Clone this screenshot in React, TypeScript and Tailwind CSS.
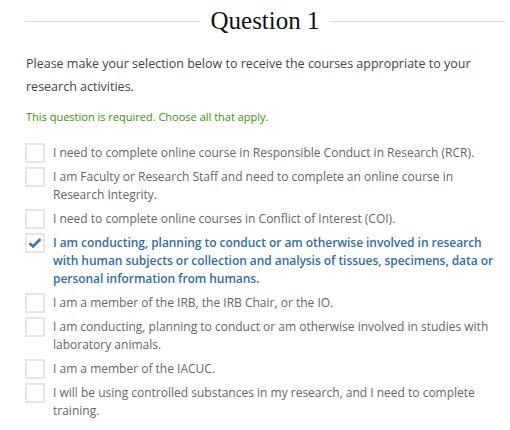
import React from "react";

const options: { text: string; checked?: boolean }[] = [
  { text: "I need to complete online course in Responsible Conduct in Research (RCR)." },
  { text: "I am Faculty or Research Staff and need to complete an online course in Research Integrity." },
  { text: "I need to complete online courses in Conflict of Interest (COI)." },
  {
    text: "I am conducting, planning to conduct or am otherwise involved in research with human subjects or collection and analysis of tissues, specimens, data or personal information from humans.",
    checked: true,
  },
  { text: "I am a member of the IRB, the IRB Chair, or the IO." },
  { text: "I am conducting, planning to conduct or am otherwise involved in studies with laboratory animals." },
  { text: "I am a member of the IACUC." },
  { text: "I will be using controlled substances in my research, and I need to complete training." },
];

export default function App() {
  return (
    <div className="w-[510px] h-[430px] bg-white overflow-hidden pl-[25px] pr-[5px] pt-[6px] font-['Open_Sans',sans-serif]">
      <div className="flex items-center gap-[10px]">
        <div className="flex-1 h-px bg-[#d9d9d9]" />
        <h1 className="font-['Liberation_Serif',serif] text-[25px] leading-[30px] text-[#111]">Question 1</h1>
        <div className="flex-1 h-px bg-[#d9d9d9]" />
      </div>
      <p className="mt-[16px] text-[12.5px] leading-[23px] text-[#444] pl-px pr-[20px]">
        Please make your selection below to receive the courses appropriate to your research activities.
      </p>
      <p className="mt-[11px] text-[11px] leading-[16px] text-[#3a9400] pl-px">
        This question is required. Choose all that apply.
      </p>
      <div className="mt-[18px] flex flex-col gap-[4px]">
        {options.map((o, i) => (
          <div key={i} className="flex items-start gap-[8px]">
            <div className="w-[20px] h-[20px] shrink-0 border-2 border-[#e6e6e6] bg-white flex items-center justify-center">
              {o.checked && (
                <svg width="14" height="12" viewBox="0 0 14 12">
                  <path d="M1.5 6.2 L5 9.5 L12.5 2" fill="none" stroke="#3a78ad" strokeWidth="2.6" strokeLinecap="butt" strokeLinejoin="miter" />
                </svg>
              )}
            </div>
            <div
              className={
                "text-[12px] leading-[18px] py-px " +
                (o.checked ? "text-[#2f6fa6] font-semibold tracking-[-0.05px]" : "text-[#666]")
              }
            >
              {o.text}
            </div>
          </div>
        ))}
      </div>
    </div>
  );
}
